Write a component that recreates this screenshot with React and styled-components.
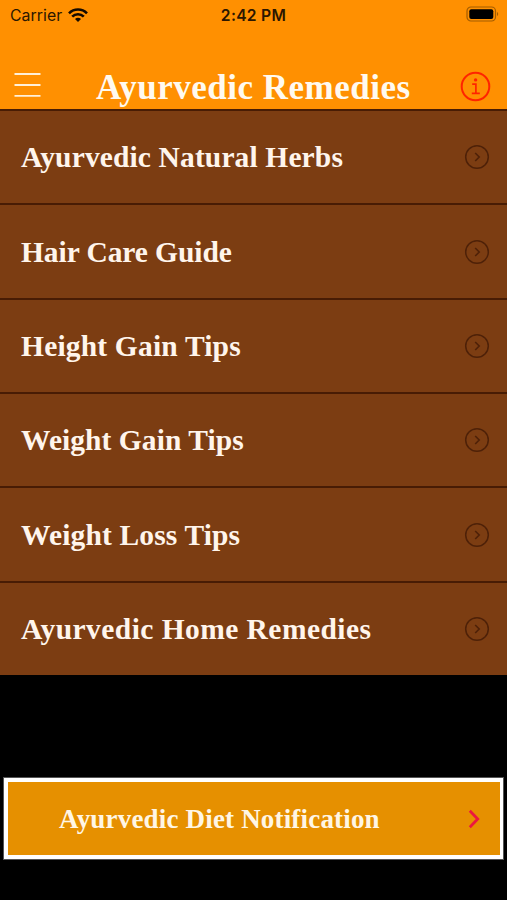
import React from "react";
import styled, { createGlobalStyle } from "styled-components";

const GlobalStyle = createGlobalStyle`
  * { box-sizing: border-box; }
  html, body { margin: 0; background: #000; }
`;

const Screen = styled.main`
  display: flex;
  flex-direction: column;
  width: 507px;
  height: 900px;
  overflow: hidden;
  background: #000;
`;

const Header = styled.header`
  height: 109px;
  flex: none;
  background: #ff9001;
`;

const StatusBar = styled.div`
  display: grid;
  grid-template-columns: 1fr auto 1fr;
  align-items: center;
  height: 30px;
  padding: 0 8px 0 10px;
  font-family: Inter, sans-serif;
  color: #2b1600;
`;

const Carrier = styled.div`
  display: flex;
  align-items: center;
  gap: 6px;
  font-size: 15.8px;
  letter-spacing: 0.06px;
`;

const Clock = styled.time`
  margin-right: 2px;
  font-size: 15.6px;
  font-weight: 600;
  letter-spacing: 0.3px;
`;

const Battery = styled.svg`
  justify-self: end;
  margin-top: -2px;
`;

const NavBar = styled.nav`
  display: grid;
  grid-template-columns: 82px 1fr 82px;
  align-items: center;
  height: 50px;
  margin-top: 31px;
`;

const IconButton = styled.button`
  display: flex;
  justify-content: ${(p) => (p.$end ? "flex-end" : "flex-start")};
  padding: 0 ${(p) => (p.$end ? "16px 0 0" : "0 2px 14px")};
  border: 0;
  background: none;
`;

const serif = `
  font-family: "Liberation Serif", serif;
  font-weight: 700;
  white-space: nowrap;
`;

const Title = styled.h1`
  ${serif}
  margin: 0 0 -2px;
  padding: 2px 0 0 14px;
  font-size: 35px;
  line-height: 50px;
  letter-spacing: 0.5px;
  color: #fffaf0;
`;

const List = styled.ul`
  display: grid;
  grid-template-rows: repeat(6, 1fr);
  flex: none;
  height: 566px;
  margin: 0;
  padding: 0;
  list-style: none;
  background: #7c3d12;
`;

const Row = styled.li`
  display: flex;
  align-items: center;
  justify-content: space-between;
  padding: 0.5px 17px 0 21px;
  border-top: 2px solid #481c04;
`;

const Label = styled.span`
  ${serif}
  font-size: 29.5px;
  line-height: 36px;
  letter-spacing: ${(p) => p.$spacing}px;
  color: #fff5ec;
`;

const Notice = styled.button`
  display: flex;
  align-items: center;
  justify-content: space-between;
  width: 501px;
  height: 83px;
  margin: 102px 0 0 3px;
  padding: 0 20px 0 51px;
  border: 5px solid #fff;
  border-right-width: 4px;
  outline: 1px solid #555;
  outline-offset: -1px;
  background: #e69000;
`;

const NoticeLabel = styled(Label)`
  font-size: 27px;
  color: #fff6e5;
`;

const ITEMS = [
  ["Ayurvedic Natural Herbs", 0.13],
  ["Hair Care Guide", -0.08],
  ["Height Gain Tips", 0.18],
  ["Weight Gain Tips", 0.05],
  ["Weight Loss Tips", 0.14],
  ["Ayurvedic Home Remedies", 0.44],
];

const WifiIcon = () => (
  <svg width="20" height="15" viewBox="0 0 20 15" fill="none" stroke="#140a00" strokeWidth="2.6">
    <path d="M1 5.3C6 .3 14 .3 19 5.3" />
    <path d="M4.2 8.7c3.2-3.2 8.4-3.2 11.6 0" />
    <path d="M7 10.9c1.7-1.5 4.3-1.5 6 0L10 14Z" fill="#140a00" stroke="none" />
  </svg>
);

const MenuIcon = () => (
  <svg width="27" height="26" viewBox="0 0 27 26" stroke="#fff0d8" strokeWidth="1.8">
    <path d="M.5 2h26M.5 13h26M.5 23.8h26" />
  </svg>
);

const InfoIcon = () => (
  <svg width="31" height="31" viewBox="0 0 31 31" fill="none" stroke="#ff2400">
    <circle cx="15.5" cy="15.5" r="13.8" strokeWidth="2" />
    <path d="M12.2 13.2h3.7v9.1M11.8 22.3h8" strokeWidth="1.7" />
    <circle cx="15.6" cy="8.9" r="1.7" fill="#ff2400" stroke="none" />
  </svg>
);

const RowArrow = () => (
  <svg width="26" height="26" viewBox="0 0 26 26" fill="none" stroke="#4e2108">
    <circle cx="13" cy="13" r="11.3" strokeWidth="1.5" />
    <path d="M11.2 9l4 4-4 4" strokeWidth="1.6" />
  </svg>
);

const NoticeArrow = () => (
  <svg width="12" height="20" viewBox="0 0 12 20" fill="none" stroke="#ec173f" strokeWidth="2.8">
    <path d="M1.8 1.8 9.7 10l-7.9 8.2" />
  </svg>
);

export default function App() {
  return (
    <>
      <GlobalStyle />
      <Screen>
        <Header>
          <StatusBar>
            <Carrier>Carrier <WifiIcon /></Carrier>
            <Clock>2:42 PM</Clock>
            <Battery width="33" height="16" viewBox="0 0 33 16">
              <rect x="1" y="1" width="28.5" height="14" rx="4" fill="none" stroke="#a35c00" strokeWidth="1.2" />
              <rect x="3.3" y="3.2" width="24" height="9.7" rx="2" fill="#000" />
              <path d="M31 6v4c1.6-.5 1.6-3.5 0-4Z" fill="#a35c00" />
            </Battery>
          </StatusBar>
          <NavBar>
            <IconButton aria-label="Menu"><MenuIcon /></IconButton>
            <Title>Ayurvedic Remedies</Title>
            <IconButton $end aria-label="Information"><InfoIcon /></IconButton>
          </NavBar>
        </Header>
        <List>
          {ITEMS.map(([name, spacing]) => (
            <Row key={name}>
              <Label $spacing={spacing}>{name}</Label>
              <RowArrow />
            </Row>
          ))}
        </List>
        <Notice>
          <NoticeLabel $spacing={0.18}>Ayurvedic Diet Notification</NoticeLabel>
          <NoticeArrow />
        </Notice>
      </Screen>
    </>
  );
}
